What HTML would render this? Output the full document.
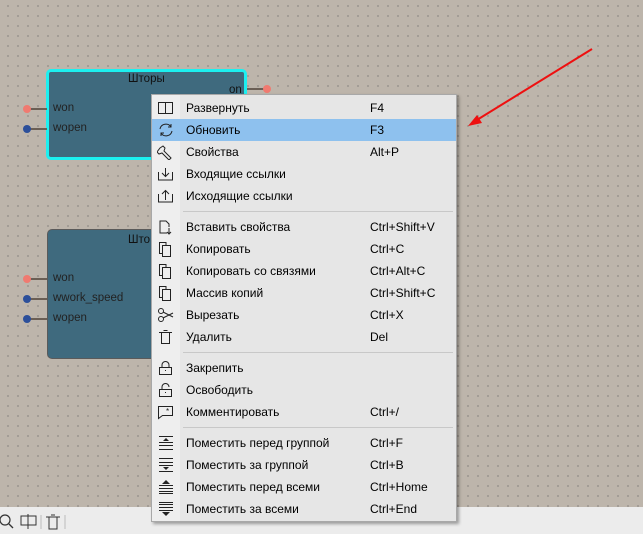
<!DOCTYPE html><html><head><meta charset="utf-8"><style>
*{margin:0;padding:0;box-sizing:border-box}
body{width:643px;height:534px;overflow:hidden;position:relative;font-family:"Liberation Sans","DejaVu Sans",sans-serif;font-size:12px;background:#bdb5ab;
background-image:radial-gradient(circle,#555 0.55px,transparent 0.7px);background-size:10px 10px;background-position:3px 1px}
.abs{position:absolute}
.node{position:absolute;background:#3f6a7e;border-radius:5px}
.lbl{position:absolute;color:#222;font-size:11.5px}
.wire{position:absolute;height:2px;background:#6b5f55}
.dot{position:absolute;width:8px;height:8px;border-radius:50%}
.menu{position:absolute;left:151px;top:94px;width:306px;height:428px;background:#e6e6e6;border:1px solid #a8a8a8;box-shadow:2px 2px 3px rgba(0,0,0,.35)}
.ic{position:absolute;left:0;top:0;width:28px;height:100%;background:#eeeeee}
.it{position:absolute;left:0;width:304px;height:22px;line-height:22px;color:#000}
.it .t{position:absolute;left:34px}
.it .k{position:absolute;left:218px}
.it svg{position:absolute;left:5px;top:3px}
.sep{position:absolute;left:31px;width:270px;height:1px;background:#c8c8c8}
.hl{background:#8ec1ee}
</style></head><body>
<div class="abs" style="left:0;top:507px;width:643px;height:27px;background:#ececec"></div>
<svg class="abs" style="left:0;top:512px" width="70" height="20"><circle cx="5" cy="8" r="5" fill="none" stroke="#333" stroke-width="1.2"/><path d="M9 12l4 4" stroke="#333" stroke-width="1.3"/><rect x="21" y="4" width="15" height="9" fill="none" stroke="#333"/><path d="M28 2v15" stroke="#333"/><path d="M41 3v14" stroke="#bbb"/><path d="M46 5h14M49 5v12h8V5M51 3h4" fill="none" stroke="#333"/><path d="M65 3v14" stroke="#bbb"/></svg>

<div class="node" style="left:46px;top:69px;width:201px;height:91px;border:3px solid #1cf0f0"></div>
<div class="lbl" style="left:128px;top:73px;color:#111">Шторы</div>
<div class="lbl" style="left:229px;top:84px;color:#111">on</div>
<div class="wire" style="left:247px;top:88px;width:18px"></div><div class="dot" style="left:263px;top:85px;background:#f07a70"></div>
<div class="wire" style="left:29px;top:108px;width:18px"></div><div class="dot" style="left:23px;top:105px;background:#f07a70"></div>
<div class="lbl" style="left:53px;top:102px">won</div>
<div class="wire" style="left:29px;top:128px;width:18px"></div><div class="dot" style="left:23px;top:125px;background:#2c4f9a"></div>
<div class="lbl" style="left:53px;top:122px">wopen</div>

<div class="node" style="left:47px;top:229px;width:130px;height:130px;border:1px solid #5a5a5a"></div>
<div class="lbl" style="left:128px;top:234px;color:#111">Што</div>
<div class="wire" style="left:29px;top:278px;width:18px"></div><div class="dot" style="left:23px;top:275px;background:#f07a70"></div>
<div class="lbl" style="left:53px;top:272px">won</div>
<div class="wire" style="left:29px;top:298px;width:18px"></div><div class="dot" style="left:23px;top:295px;background:#2c4f9a"></div>
<div class="lbl" style="left:53px;top:292px">wwork_speed</div>
<div class="wire" style="left:29px;top:318px;width:18px"></div><div class="dot" style="left:23px;top:315px;background:#2c4f9a"></div>
<div class="lbl" style="left:53px;top:312px">wopen</div>

<svg class="abs" style="left:460px;top:40px" width="140" height="95"><path d="M132 9L12 83" stroke="#ee1010" stroke-width="2"/><path d="M8 86l14-3-5-8z" fill="#ee1010"/></svg>

<div class="menu"><div class="ic"></div>
<div class="it" style="top:2px"><svg width="18" height="16"><rect x="1.5" y="2.5" width="14" height="11" fill="none" stroke="#222"/><path d="M8.5 2v12" stroke="#222"/></svg><span class="t">Развернуть</span><span class="k">F4</span></div>
<div class="it hl" style="top:24px"><svg width="18" height="16"><path d="M3 7a6 6 0 0 1 11-2M15 9a6 6 0 0 1-11 2" fill="none" stroke="#222"/><path d="M14 2v3h-3M4 14v-3h3" fill="none" stroke="#222"/></svg><span class="t">Обновить</span><span class="k">F3</span></div>
<div class="it" style="top:46px"><svg width="18" height="16"><path d="M3 4l3-2 2 2-1 3 7 7-2 2-7-7-3 1-2-2z" fill="none" stroke="#222"/></svg><span class="t">Свойства</span><span class="k">Alt+P</span></div>
<div class="it" style="top:68px"><svg width="18" height="16"><path d="M1.5 6v8h14V6M8.5 2v8M5 7l3.5 3.5L12 7" fill="none" stroke="#222"/></svg><span class="t">Входящие ссылки</span></div>
<div class="it" style="top:90px"><svg width="18" height="16"><path d="M1.5 6v8h14V6M8.5 12V3M5 6l3.5-3.5L12 6" fill="none" stroke="#222"/></svg><span class="t">Исходящие ссылки</span></div>
<div class="sep" style="top:116px"></div>
<div class="it" style="top:121px"><svg width="18" height="16"><path d="M10 14H3V2h6l3 3v3M12 9v6M10 13l2 2 2-2" fill="none" stroke="#222"/></svg><span class="t">Вставить свойства</span><span class="k">Ctrl+Shift+V</span></div>
<div class="it" style="top:143px"><svg width="18" height="16"><path d="M9 4V1.5H2.5v11H5M5.5 4.5h8v11h-8z" fill="none" stroke="#222"/></svg><span class="t">Копировать</span><span class="k">Ctrl+C</span></div>
<div class="it" style="top:165px"><svg width="18" height="16"><path d="M9 4V1.5H2.5v11H5M5.5 4.5h8v11h-8z" fill="none" stroke="#222"/></svg><span class="t">Копировать со связями</span><span class="k">Ctrl+Alt+C</span></div>
<div class="it" style="top:187px"><svg width="18" height="16"><path d="M9 4V1.5H2.5v11H5M5.5 4.5h8v11h-8z" fill="none" stroke="#222"/></svg><span class="t">Массив копий</span><span class="k">Ctrl+Shift+C</span></div>
<div class="it" style="top:209px"><svg width="18" height="16"><circle cx="4" cy="4" r="2.5" fill="none" stroke="#222"/><circle cx="4" cy="12" r="2.5" fill="none" stroke="#222"/><path d="M6 5l10 5M6 11l10-5" stroke="#222"/></svg><span class="t">Вырезать</span><span class="k">Ctrl+X</span></div>
<div class="it" style="top:231px"><svg width="18" height="16"><path d="M2 3.5h13M4.5 4v10.5h8V4M6.5 1.5h4" fill="none" stroke="#222"/></svg><span class="t">Удалить</span><span class="k">Del</span></div>
<div class="sep" style="top:257px"></div>
<div class="it" style="top:262px"><svg width="18" height="16"><path d="M2.5 7.5h12v7h-12zM5 7V5a3.5 3.5 0 0 1 7 0v2" fill="none" stroke="#222"/><rect x="8" y="10" width="1" height="1" fill="#222"/></svg><span class="t">Закрепить</span></div>
<div class="it" style="top:284px"><svg width="18" height="16"><path d="M2.5 7.5h12v7h-12zM5 7V5a3.5 3.5 0 0 1 7 0" fill="none" stroke="#222"/><rect x="8" y="10" width="1" height="1" fill="#222"/></svg><span class="t">Освободить</span></div>
<div class="it" style="top:306px"><svg width="18" height="16"><path d="M1.5 2.5h14v9h-10l-4 3z" fill="none" stroke="#222"/><text x="9" y="10" font-size="8" fill="#222">*</text></svg><span class="t">Комментировать</span><span class="k">Ctrl+/</span></div>
<div class="sep" style="top:332px"></div>
<div class="it" style="top:337px"><svg width="18" height="16"><path d="M2 1.5h14M2 14.5h14M2 7.5h14M2 10.5h14" stroke="#222"/><path d="M9 3l-3 3h6z" fill="#222"/></svg><span class="t">Поместить перед группой</span><span class="k">Ctrl+F</span></div>
<div class="it" style="top:359px"><svg width="18" height="16"><path d="M2 1.5h14M2 14.5h14M2 5.5h14M2 8.5h14" stroke="#222"/><path d="M9 13l-3-3h6z" fill="#222"/></svg><span class="t">Поместить за группой</span><span class="k">Ctrl+B</span></div>
<div class="it" style="top:381px"><svg width="18" height="16"><path d="M2 6.5h14M2 9.5h14M2 12.5h14M2 14.5h14" stroke="#222"/><path d="M9 1l-4 4h8z" fill="#222"/></svg><span class="t">Поместить перед всеми</span><span class="k">Ctrl+Home</span></div>
<div class="it" style="top:403px"><svg width="18" height="16"><path d="M2 1.5h14M2 3.5h14M2 6.5h14M2 9.5h14" stroke="#222"/><path d="M9 15l-4-4h8z" fill="#222"/></svg><span class="t">Поместить за всеми</span><span class="k">Ctrl+End</span></div>
</div>
</body></html>
